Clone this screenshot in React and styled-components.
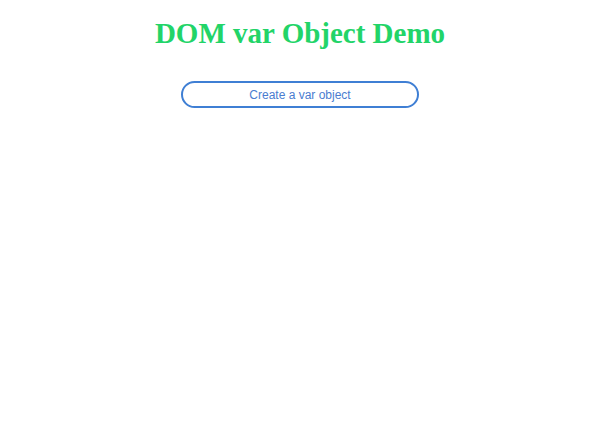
import React from 'react';
import styled, { createGlobalStyle } from 'styled-components';

const GlobalStyle = createGlobalStyle`
  body {
    margin: 0;
    background: #ffffff;
  }
`;

const Page = styled.div`
  display: flex;
  flex-direction: column;
  align-items: center;
  padding-top: 16px;
`;

const Title = styled.h1`
  margin: 0;
  font-family: 'Liberation Serif', 'Times New Roman', serif;
  font-size: 29px;
  font-weight: bold;
  line-height: 34px;
  color: #22d468;
`;

const Button = styled.button`
  margin-top: 31px;
  width: 238px;
  height: 27px;
  border: 2px solid #3f7fd4;
  border-radius: 14px;
  background: #ffffff;
  color: #4a7dd0;
  font-family: 'Liberation Sans', Arial, sans-serif;
  font-size: 12px;
  cursor: pointer;
`;

const App = () => (
  <>
    <GlobalStyle />
    <Page>
      <Title>DOM var Object Demo</Title>
      <Button>Create a var object</Button>
    </Page>
  </>
);

export default App;
